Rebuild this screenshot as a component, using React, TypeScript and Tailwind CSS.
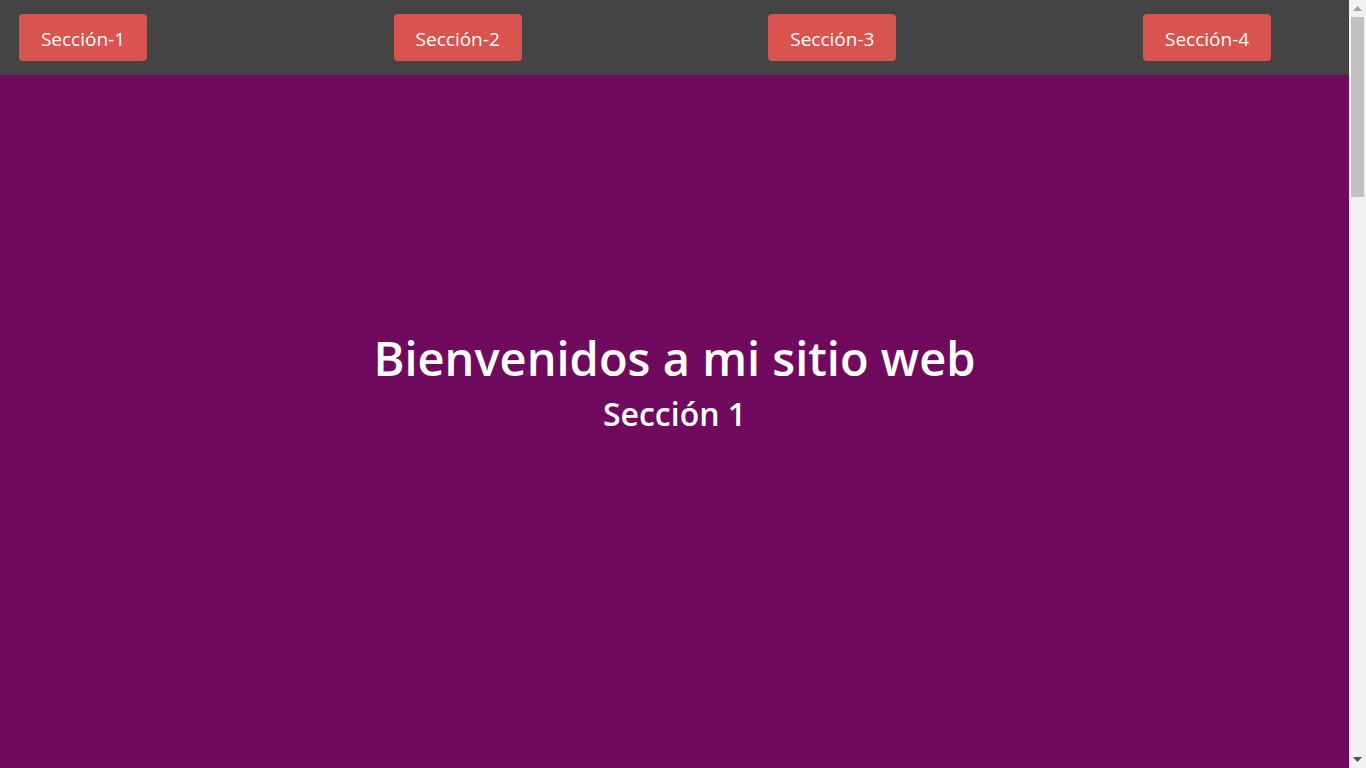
export default function App() {
  return (
    <div className="h-screen w-full flex overflow-hidden font-['Open_Sans','Noto_Sans',sans-serif] text-white">
      <div className="flex-1 flex flex-col overflow-hidden">
        <nav className="h-[75px] shrink-0 bg-[#444444] flex items-center pl-[19px]">
          {[1, 2, 3, 4].map((n) => (
            <div key={n} className="w-[374.7px] shrink-0">
              <a
                href={`#s${n}`}
                className="inline-flex items-center justify-center w-[128px] h-[47px] pt-[3px] rounded-[4px] bg-[#d9534f] text-[19px] text-white"
              >
                Sección-{n}
              </a>
            </div>
          ))}
        </nav>
        <section
          id="s1"
          className="h-[693px] pb-[75px] shrink-0 bg-[#6f0a5f] flex flex-col items-center justify-center text-center"
        >
          <div className="mt-[6px] flex flex-col items-center">
            <h1 className="text-[47px] font-semibold leading-[54px]">Bienvenidos a mi sitio web</h1>
            <h2 className="text-[32px] font-semibold leading-[58px]">Sección 1</h2>
          </div>
        </section>
      </div>
      <div className="w-[17px] shrink-0 h-full bg-[#f1f1f1] flex flex-col items-center">
        <div className="h-[17px] w-full flex items-center justify-center">
          <svg width="9" height="5" viewBox="0 0 9 5">
            <polygon points="4.5,0 9,5 0,5" fill="#a3a3a3" />
          </svg>
        </div>
        <div className="w-[13px] h-[180px] bg-[#c1c1c1]" />
        <div className="flex-1" />
        <div className="h-[17px] w-full flex items-center justify-center">
          <svg width="9" height="5" viewBox="0 0 9 5">
            <polygon points="0,0 9,0 4.5,5" fill="#505050" />
          </svg>
        </div>
      </div>
    </div>
  );
}
